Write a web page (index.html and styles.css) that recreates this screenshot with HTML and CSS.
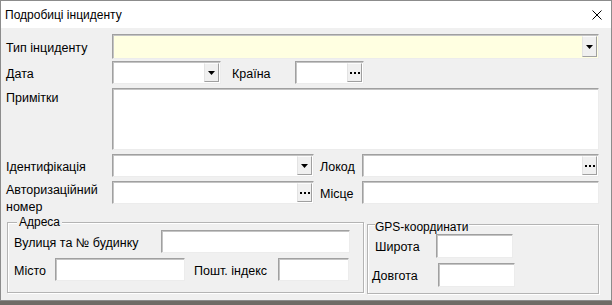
FILE: index.html
```html
<!DOCTYPE html>
<html lang="uk">
<head>
<meta charset="utf-8">
<title>Подробиці інциденту</title>
<link rel="stylesheet" href="styles.css">
</head>
<body>
<div class="window">
  <div class="titlebar">
    <span class="title">Подробиці інциденту</span>
    <svg class="close" width="10" height="10" viewBox="0 0 10 10"><path d="M0.5 0.5L9.5 9.5M9.5 0.5L0.5 9.5" stroke="#000" stroke-width="1" fill="none"/></svg>
  </div>
  <div class="content">
    <div class="row r1">
      <span class="lbl">Тип інциденту</span>
      <div class="fld yellow w-full h25"><span class="btn"><svg width="7" height="4" viewBox="0 0 7 4"><polygon points="0,0 7,0 3.5,4" fill="#000"/></svg></span></div>
    </div>
    <div class="row r2">
      <span class="lbl">Дата</span>
      <div class="fld w-date"><span class="btn"><svg width="7" height="4" viewBox="0 0 7 4"><polygon points="0,0 7,0 3.5,4" fill="#000"/></svg></span></div>
      <span class="lbl2 l-country">Країна</span>
      <div class="fld w-country"><span class="btn"><svg width="10" height="2" viewBox="0 0 10 2"><rect x="0" y="0" width="2" height="2"/><rect x="4" y="0" width="2" height="2"/><rect x="8" y="0" width="2" height="2"/></svg></span></div>
    </div>
    <div class="row r3">
      <span class="lbl top">Примітки</span>
      <div class="fld w-full memo"></div>
    </div>
    <div class="row r4">
      <span class="lbl">Ідентифікація</span>
      <div class="fld w-mid"><span class="btn"><svg width="7" height="4" viewBox="0 0 7 4"><polygon points="0,0 7,0 3.5,4" fill="#000"/></svg></span></div>
      <span class="lbl2 l-right">Локод</span>
      <div class="fld w-right"><span class="btn"><svg width="10" height="2" viewBox="0 0 10 2"><rect x="0" y="0" width="2" height="2"/><rect x="4" y="0" width="2" height="2"/><rect x="8" y="0" width="2" height="2"/></svg></span></div>
    </div>
    <div class="row r5">
      <span class="lbl two">Авторизаційний<br>номер</span>
      <div class="fld w-mid"><span class="btn"><svg width="10" height="2" viewBox="0 0 10 2"><rect x="0" y="0" width="2" height="2"/><rect x="4" y="0" width="2" height="2"/><rect x="8" y="0" width="2" height="2"/></svg></span></div>
      <span class="lbl2 l-right">Місце</span>
      <div class="fld w-right"></div>
    </div>
    <div class="groups">
      <div class="group addr">
        <span class="legend addr-legend">Адреса</span>
        <div class="grow g-street">
          <span class="glbl w-street-l">Вулиця та № будинку</span>
          <div class="fld w-street"></div>
        </div>
        <div class="grow g-city">
          <span class="glbl w-city-l">Місто</span>
          <div class="fld w-city"></div>
          <span class="glbl w-zip-l">Пошт. індекс</span>
          <div class="fld w-zip"></div>
        </div>
      </div>
      <div class="group gps">
        <span class="legend gps-legend">GPS-координати</span>
        <div class="grow g-lat">
          <span class="glbl w-lat-l">Широта</span>
          <div class="fld w-coord h24"></div>
        </div>
        <div class="grow g-lon">
          <span class="glbl w-lon-l">Довгота</span>
          <div class="fld w-coord h24"></div>
        </div>
      </div>
    </div>
  </div>
</div>
</body>
</html>
```

FILE: styles.css
```css
* { box-sizing: border-box; }
html, body { margin: 0; padding: 0; }
body {
  width: 612px;
  height: 305px;
  overflow: hidden;
  background: #6f6b66;
  font-family: "Liberation Sans", Arial, sans-serif;
  font-size: 12px;
  color: #000;
}
.window {
  width: 612px;
  height: 301px;
  border: 1px solid #8c8c8c;
  background: #f0f0f0;
  display: flex;
  flex-direction: column;
}
.titlebar {
  height: 27px;
  flex: none;
  background: #fff;
  display: flex;
  align-items: center;
  justify-content: space-between;
  padding: 0 9px 0 4px;
}
.title { font-size: 12px; }
.close { display: block; }
.content { padding: 6px 0 0 5px; }

.row { display: flex; align-items: center; }
.lbl, .lbl2, .glbl { font-size: 12.5px; }
.lbl { width: 106px; flex: none; padding-top: 3px; }
.lbl.top { align-self: flex-start; padding-top: 3px; }
.lbl.two { align-self: flex-start; line-height: 17px; padding-top: 1px; }
.lbl2 { flex: none; padding-top: 3px; }

.r1 { height: 25px; }
.r2 { height: 23px; margin-top: 2px; }
.r3 { height: 62px; margin-top: 4px; align-items: flex-start; }
.r4 { height: 23px; margin-top: 4px; }
.r5 { height: 23px; margin-top: 4px; }

.fld {
  flex: none;
  height: 23px;
  background: #fff;
  border: 1px solid;
  border-color: #a0a0a0 #ececec #ececec #a0a0a0;
  box-shadow: inset 1px 1px 0 #c4c4c4;
  display: flex;
  justify-content: flex-end;
  padding: 1px 1px 1px 0;
}
.yellow { background: #ffffe1; }
.h25 { height: 25px; }
.h24 { height: 24px; }
.memo { height: 62px; }
.w-full { width: 487px; }
.w-date { width: 109px; }
.w-country { width: 69px; }
.w-mid { width: 202px; }
.w-right { width: 237px; }
.l-country { width: 63px; margin-left: 11px; }
.l-right { width: 42px; margin-left: 6px; }

.btn {
  width: 15px;
  height: 100%;
  background: #f0f0f0;
  border: 1px solid;
  border-color: #fcfcfc #a0a0a0 #a0a0a0 #e3e3e3;
  display: flex;
  align-items: center;
  justify-content: center;
}
.btn svg { display: block; }

.groups { display: flex; align-items: flex-start; margin-top: 18px; }
.group {
  flex: none;
  border: 1px solid #b4b4b4;
  box-shadow: inset 1px 1px 0 #fff, 1px 1px 0 #fff;
  display: flex;
  flex-direction: column;
}
.addr { width: 357px; height: 71px; margin-left: 1px; }
.gps { width: 232px; height: 70px; margin-left: 3px; margin-top: 2px; }
.legend {
  align-self: flex-start;
  line-height: 14px;
  background: #f0f0f0;
}
.addr-legend { margin: -8px 0 0 9px; padding: 0 2px; }
.gps-legend { margin: -5px 0 0 7px; padding: 0 1px 0 0; }

.grow { display: flex; align-items: center; }
.glbl { flex: none; padding-top: 2px; }
.g-street { margin-top: 1px; padding-left: 6px; }
.g-city { margin-top: 5px; padding-left: 6px; }
.w-street-l { width: 147px; }
.w-street { width: 189px; }
.w-city-l { width: 41px; }
.w-city { width: 130px; }
.w-zip-l { width: 84px; margin-left: 9px; }
.w-zip { width: 71px; }

.g-lat { margin-top: 0; padding-left: 7px; }
.g-lon { margin-top: 5px; padding-left: 4px; }
.w-lat-l { width: 61px; }
.w-lon-l { width: 66px; }
.w-coord { width: 77px; }
```
